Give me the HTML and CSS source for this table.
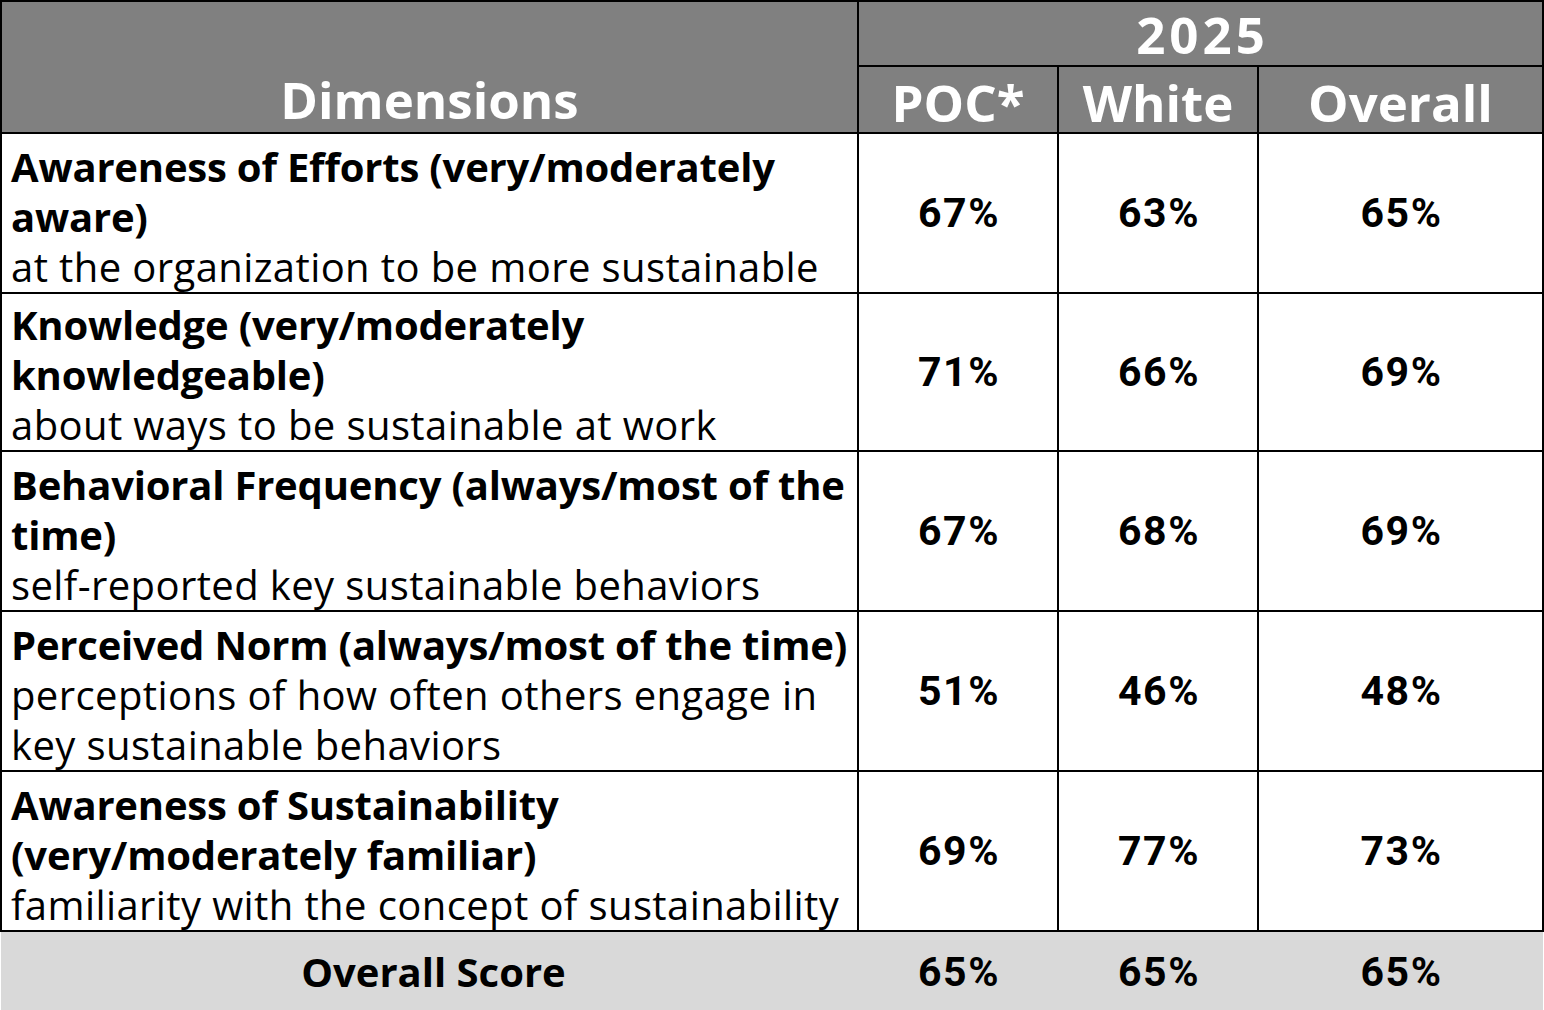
FILE: index.html
```html
<!DOCTYPE html>
<html>
<head>
<meta charset="utf-8">
<link rel="stylesheet" href="styles.css">
</head>
<body>
<table class="grid">
  <colgroup>
    <col class="c-dim">
    <col class="c-val">
    <col class="c-val">
    <col class="c-all">
  </colgroup>
  <thead>
    <tr class="h1">
      <th class="dim-head" rowspan="2">Dimensions</th>
      <th class="year" colspan="3">2025</th>
    </tr>
    <tr class="h2">
      <th>POC*</th>
      <th>White</th>
      <th>Overall</th>
    </tr>
  </thead>
  <tbody>
    <tr class="r160">
      <td class="dim"><b>Awareness of Efforts (very/moderately<br>aware)</b><br>at the organization to be more sustainable</td>
      <td class="num">67%</td><td class="num">63%</td><td class="num">65%</td>
    </tr>
    <tr class="r158">
      <td class="dim"><b>Knowledge (very/moderately<br>knowledgeable)</b><br>about ways to be sustainable at work</td>
      <td class="num">71%</td><td class="num">66%</td><td class="num">69%</td>
    </tr>
    <tr class="r160">
      <td class="dim"><b>Behavioral Frequency (always/most of the<br>time)</b><br>self-reported key sustainable behaviors</td>
      <td class="num">67%</td><td class="num">68%</td><td class="num">69%</td>
    </tr>
    <tr class="r160">
      <td class="dim"><b>Perceived Norm (always/most of the time)</b><br>perceptions of how often others engage in<br>key sustainable behaviors</td>
      <td class="num">51%</td><td class="num">46%</td><td class="num">48%</td>
    </tr>
    <tr class="r160">
      <td class="dim"><b>Awareness of Sustainability<br>(very/moderately familiar)</b><br>familiarity with the concept of sustainability</td>
      <td class="num">69%</td><td class="num">77%</td><td class="num">73%</td>
    </tr>
  </tbody>
  <tfoot>
    <tr class="foot">
      <td class="foot-label">Overall Score</td>
      <td class="num">65%</td><td class="num">65%</td><td class="num">65%</td>
    </tr>
  </tfoot>
</table>
</body>
</html>
```
FILE: styles.css
```css
html, body {
  margin: 0;
  padding: 0;
  background: #ffffff;
}
body {
  font-family: "Open Sans", "Liberation Sans", sans-serif;
  color: #000;
  width: 1544px;
  height: 1010px;
  overflow: hidden;
}
.grid {
  border-collapse: collapse;
  table-layout: fixed;
  width: 1542px;
}
.c-dim { width: 857px; }
.c-val { width: 200px; }
.c-all { width: 285px; }

.grid th, .grid td {
  border: 2px solid #000;
  padding: 0;
}
.grid thead th {
  background: #808080;
  color: #fff;
  font-weight: 700;
  font-size: 51px;
  line-height: 60px;
  text-align: center;
  white-space: nowrap;
}
.h1 { height: 65px; }
.h2 { height: 67px; }
.grid .year {
  vertical-align: middle;
  letter-spacing: 4px;
  padding-left: 4px;
}
.grid .h2 th { vertical-align: middle; padding-top: 4px; }
.grid .dim-head { vertical-align: bottom; padding-bottom: 3px; }

.r160 { height: 160px; }
.r158 { height: 158px; }

.grid .dim {
  font-size: 40px;
  line-height: 50px;
  font-weight: 500;
  letter-spacing: 0.4px;
  padding: 0 0 0 9px;
  white-space: nowrap;
  vertical-align: bottom;
}
.dim b { font-weight: 700; letter-spacing: -0.2px; }
.grid .num {
  font-family: "Roboto", "Liberation Sans", sans-serif;
  font-weight: 700;
  font-size: 41px;
  letter-spacing: 1.6px;
  padding-left: 2px;
  text-align: center;
  vertical-align: middle;
}
.foot { height: 80px; }
.grid .foot td {
  background: #d9d9d9;
  border-left: none;
  border-right: none;
  border-bottom: none;
}
.grid .foot-label {
  font-size: 40px;
  font-weight: 700;
  letter-spacing: 0;
  padding-left: 8px;
  text-align: center;
}
```
